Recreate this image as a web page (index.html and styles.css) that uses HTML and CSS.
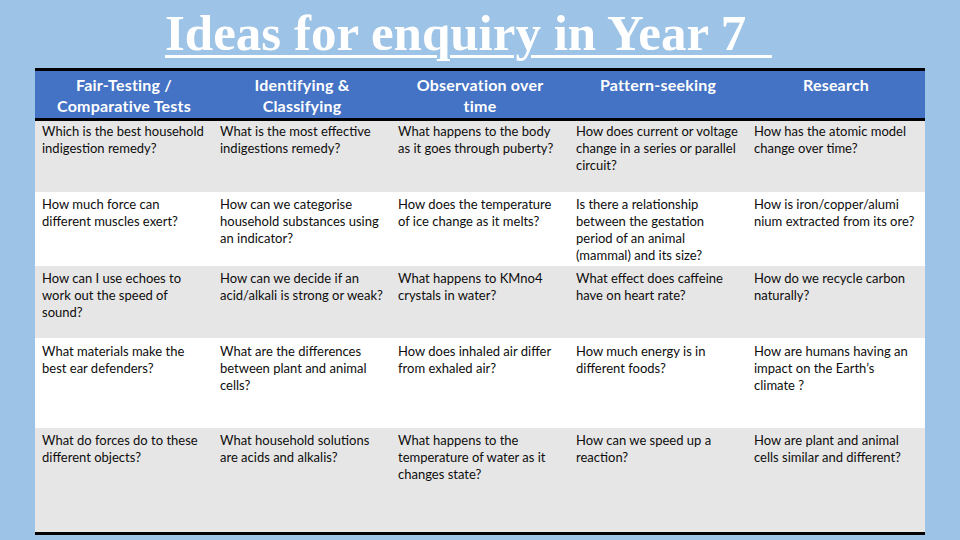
FILE: index.html
```html
<!DOCTYPE html>
<html>
<head>
<meta charset="utf-8">
<link rel="stylesheet" href="styles.css">
</head>
<body>
<h1 class="title"><span class="title-text">Ideas for enquiry in Year 7&nbsp;&nbsp;</span></h1>
<div class="grid">
  <div class="row head">
    <div class="cell">Fair-Testing /<br>Comparative Tests</div>
    <div class="cell">Identifying &amp;<br>Classifying</div>
    <div class="cell">Observation over<br>time</div>
    <div class="cell">Pattern-seeking</div>
    <div class="cell">Research</div>
  </div>
  <div class="row grey r1">
    <div class="cell">Which is the best household<br>indigestion remedy?</div>
    <div class="cell">What is the most effective<br>indigestions remedy?</div>
    <div class="cell">What happens to the body<br>as it goes through puberty?</div>
    <div class="cell">How does current or voltage<br>change in a series or parallel<br>circuit?</div>
    <div class="cell">How has the atomic model<br>change over time?</div>
  </div>
  <div class="row white r2">
    <div class="cell">How much force can<br>different muscles exert?</div>
    <div class="cell">How can we categorise<br>household substances using<br>an indicator?</div>
    <div class="cell">How does the temperature<br>of ice change as it melts?</div>
    <div class="cell">Is there a relationship<br>between the gestation<br>period of an animal<br>(mammal) and its size?</div>
    <div class="cell">How is iron/copper/alumi<br>nium extracted from its ore?</div>
  </div>
  <div class="row grey r3">
    <div class="cell">How can I use echoes to<br>work out the speed of<br>sound?</div>
    <div class="cell">How can we decide if an<br>acid/alkali is strong or weak?</div>
    <div class="cell">What happens to KMno4<br>crystals in water?</div>
    <div class="cell">What effect does caffeine<br>have on heart rate?</div>
    <div class="cell">How do we recycle carbon<br>naturally?</div>
  </div>
  <div class="row white r4">
    <div class="cell">What materials make the<br>best ear defenders?</div>
    <div class="cell">What are the differences<br>between plant and animal<br>cells?</div>
    <div class="cell">How does inhaled air differ<br>from exhaled air?</div>
    <div class="cell">How much energy is in<br>different foods?</div>
    <div class="cell">How are humans having an<br>impact on the Earth’s<br>climate ?</div>
  </div>
  <div class="row grey r5">
    <div class="cell">What do forces do to these<br>different objects?</div>
    <div class="cell">What household solutions<br>are acids and alkalis?</div>
    <div class="cell">What happens to the<br>temperature of water as it<br>changes state?</div>
    <div class="cell">How can we speed up a<br>reaction?</div>
    <div class="cell">How are plant and animal<br>cells similar and different?</div>
  </div>
</div>
</body>
</html>
```
FILE: styles.css
```css
* { box-sizing: border-box; }
html, body {
  margin: 0;
  padding: 0;
  width: 960px;
  height: 540px;
  overflow: hidden;
  background: #9DC3E6;
}
.title {
  margin: 0;
  padding: 5px 0 0 165px;
  height: 68px;
  font-family: "Liberation Serif", "Times New Roman", serif;
  font-weight: bold;
  font-size: 51px;
  line-height: 56px;
  color: #ffffff;
}
.title-text {
  text-decoration: underline;
  text-decoration-thickness: 3px;
  text-underline-offset: 5px;
  white-space: pre;
}
.grid {
  margin-left: 35px;
  width: 890px;
  border-top: 3px solid #000;
  border-bottom: 3px solid #000;
  font-family: Lato, "Liberation Sans", sans-serif;
}
.row {
  display: grid;
  grid-template-columns: repeat(5, 178px);
}
.cell {
  white-space: nowrap;
  font-size: 13px;
  line-height: 17px;
  color: #0d0d0d;
  padding: 4px 2px 0 7px;
}
.head {
  height: 50px;
  background: #4472C4;
  border-bottom: 3px solid #000;
  text-align: center;
}
.head .cell {
  font-weight: bold;
  font-size: 16px;
  line-height: 21px;
  letter-spacing: 0.2px;
  color: #ffffff;
  padding: 3px 4px 0;
}
.grey { background: #E7E6E6; }
.white { background: #ffffff; }
.r1 { height: 71px; }
.r1 .cell { padding-top: 2px; }
.r2 { height: 74px; }
.r3 { height: 72px; }
.r4 { height: 90px; }
.r4 .cell { padding-top: 5px; }
.r5 { height: 104px; }
```
